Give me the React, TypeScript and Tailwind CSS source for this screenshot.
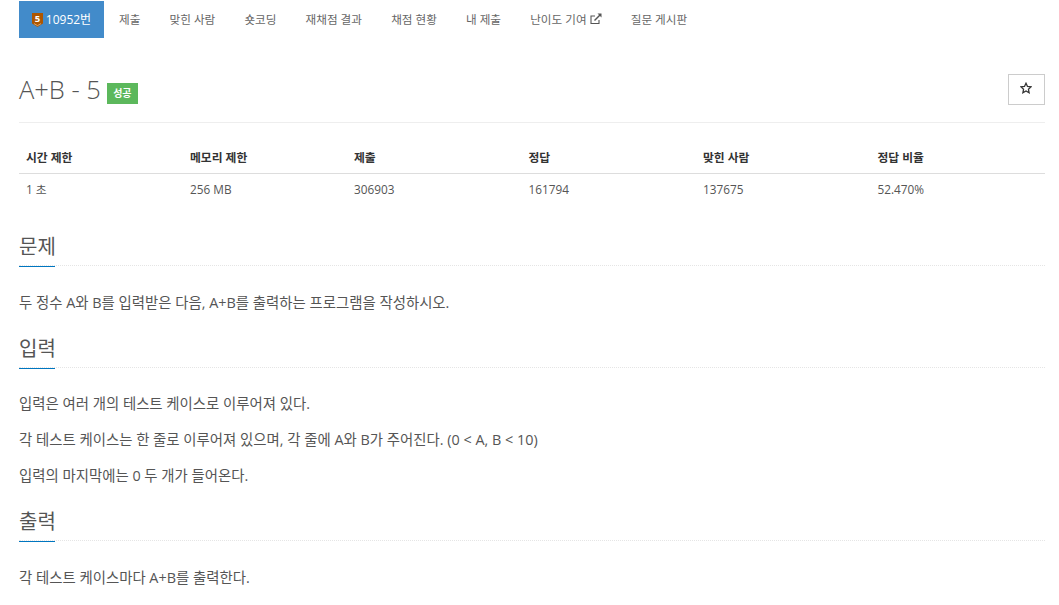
import React from "react";

const tabs = ["제출", "맞힌 사람", "숏코딩", "재채점 결과", "채점 현황", "내 제출"];

function Section({ title, gap, children }: { title: string; gap: string; children: React.ReactNode }) {
  return (
    <section>
      <div className="relative border-b border-dotted border-[#e5e5e5] h-[35px] flex items-start">
        <h2 className="text-[20px] leading-[28px] pt-[2px] text-[#555] font-normal whitespace-nowrap">{title}</h2>
        <div className="absolute left-0 bottom-[-2px] w-[36px] h-[1px] bg-[#0076c0]" />
      </div>
      <div className={`${gap} text-[14.4px] leading-[20px] text-[#555]`}>{children}</div>
    </section>
  );
}

export default function App() {
  return (
    <div className="w-[1059px] h-[605px] overflow-hidden bg-white pl-[19px] pr-[14px] pt-[1px] font-['Open_Sans','Noto_Sans_CJK_KR',sans-serif] text-[#555]">
      <nav className="flex h-[37px] text-[11.6px] items-center">
        <div className="w-[85px] h-[37px] bg-[#428bca] text-white flex items-center justify-center gap-[3px] text-[12px] mr-[15px]">
          <svg width="11" height="14" viewBox="0 0 11 14" className="overflow-visible">
            <path d="M0 0H11V10.5L5.5 14L0 10.5Z" fill="#ad5600" />
            <path d="M2 10.6L5.5 12.6L9 10.6" fill="none" stroke="#e8c9a0" strokeWidth="0.7" />
            <text x="5.5" y="9" textAnchor="middle" fontSize="9.5" fontWeight="700" fill="#fff">5</text>
          </svg>
          <span>10952번</span>
        </div>
        <div className="flex gap-[29.2px] items-center text-[#666]">
          {tabs.map((t) => <span key={t} className="whitespace-nowrap">{t}</span>)}
          <span className="flex items-center gap-[3px] whitespace-nowrap">
            난이도 기여
            <svg width="12" height="12" viewBox="0 0 12 12" fill="none" stroke="#555" strokeWidth="1.1">
              <path d="M9 7V10.5H1V3H5" />
              <path d="M4.5 7.5L10.5 1.5" strokeWidth="1.5" />
              <path d="M7.5 .5H11.5V4.5Z" fill="#555" stroke="none" />
            </svg>
          </span>
          <span className="whitespace-nowrap">질문 게시판</span>
        </div>
      </nav>

      <header className="mt-[36px] h-[49px] border-b border-[#eee] flex items-start justify-between">
        <div className="flex items-center h-[31px] gap-[6px]">
          <h1 className="text-[25.5px] leading-[31px] font-light text-[#555]">A+B - 5</h1>
          <span className="mt-[7px] w-[31px] h-[21px] bg-[#5cb85c] text-white text-[10px] font-bold flex items-center justify-center">성공</span>
        </div>
        <button className="w-[37px] h-[31px] border border-[#ccc] flex items-center justify-center pb-[4px] pr-[2px] bg-white">
          <svg width="12" height="12" viewBox="0 0 24 24" fill="none" stroke="#333" strokeWidth="2.6">
            <path d="M12 2.5l3 6.4 7 .9-5.1 4.8 1.3 6.9-6.2-3.4-6.2 3.4 1.3-6.9L2 9.8l7-.9z" />
          </svg>
        </button>
      </header>

      <div className="mt-[21px] text-[11.8px]">
        <div className="grid grid-cols-[164px_164px_174.5px_174.5px_174.5px_1fr] h-[30px] pb-[2px] border-b border-[#ddd] items-center font-bold text-[#333] pl-[7px]">
          <span>시간 제한</span><span>메모리 제한</span><span>제출</span><span>정답</span><span>맞힌 사람</span><span>정답 비율</span>
        </div>
        <div className="grid grid-cols-[164px_164px_174.5px_174.5px_174.5px_1fr] h-[32px] items-center pl-[7px] text-[#555]">
          <span>1 초</span><span>256 MB</span><span>306903</span><span>161794</span><span>137675</span><span>52.470%</span>
        </div>
      </div>

      <div className="mt-[25px]">
        <Section title="문제" gap="pt-[27px]">
          <p>두 정수 A와 B를 입력받은 다음, A+B를 출력하는 프로그램을 작성하시오.</p>
        </Section>
      </div>
      <div className="mt-[20px]">
        <Section title="입력" gap="pt-[26px]">
          <p>입력은 여러 개의 테스트 케이스로 이루어져 있다.</p>
          <p className="mt-[16px]">각 테스트 케이스는 한 줄로 이루어져 있으며, 각 줄에 A와 B가 주어진다. (0 &lt; A, B &lt; 10)</p>
          <p className="mt-[16px]">입력의 마지막에는 0 두 개가 들어온다.</p>
        </Section>
      </div>
      <div className="mt-[20px]">
        <Section title="출력" gap="pt-[27px]">
          <p>각 테스트 케이스마다 A+B를 출력한다.</p>
        </Section>
      </div>
    </div>
  );
}
